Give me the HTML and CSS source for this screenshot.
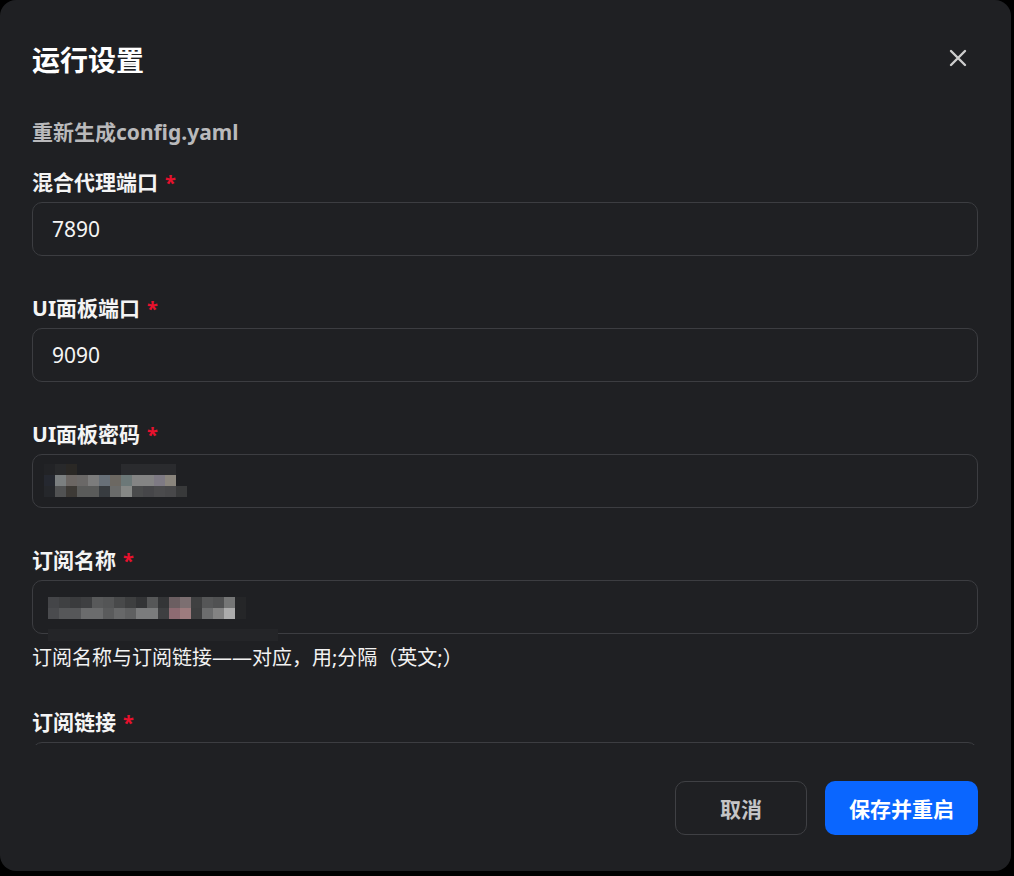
FILE: index.html
```html
<!DOCTYPE html>
<html lang="zh-CN">
<head>
<meta charset="utf-8">
<title>运行设置</title>
<link rel="stylesheet" href="styles.css">
</head>
<body>
<div class="dialog">
  <div class="header">
    <h1 class="title">运行设置</h1>
    <button class="close" aria-label="关闭">
      <svg width="18" height="18" viewBox="0 0 18 18"><path d="M2 2L16 16M16 2L2 16" stroke="#cdcdcd" stroke-width="2.4" stroke-linecap="round" fill="none"/></svg>
    </button>
  </div>
  <div class="body">
    <div class="section-title">重新生成config.yaml</div>
    <div class="fields">
      <div class="field">
        <label class="label">混合代理端口<span class="req">*</span></label>
        <div class="input">7890</div>
      </div>
      <div class="field">
        <label class="label">UI面板端口<span class="req">*</span></label>
        <div class="input">9090</div>
      </div>
      <div class="field">
        <label class="label">UI面板密码<span class="req">*</span></label>
        <div class="input">
          <div class="mosaic mosaic-pass">
            <i style="background:#222326"></i><i style="background:#28292b"></i><i style="background:#2a2825"></i><i></i><i></i><i></i><i></i><i style="background:#2a2b2e"></i><i style="background:#2a2b2e"></i><i style="background:#2a2b2e"></i><i style="background:#2a2b2e"></i><i style="background:#2a2b2e"></i><i></i>
            <i style="background:#252830"></i><i style="background:#7b7f80"></i><i style="background:#6b6663"></i><i style="background:#6a6867"></i><i style="background:#7c7c7c"></i><i style="background:#687078"></i><i style="background:#6c6862"></i><i style="background:#6c7878"></i><i style="background:#848484"></i><i style="background:#848484"></i><i style="background:#7e7a84"></i><i style="background:#8a857d"></i><i></i>
            <i style="background:#25272b"></i><i style="background:#515253"></i><i style="background:#3d3a36"></i><i style="background:#5a5b5a"></i><i style="background:#5a5b5a"></i><i style="background:#383c40"></i><i style="background:#6a6b6a"></i><i style="background:#868886"></i><i style="background:#4a4b4c"></i><i style="background:#464649"></i><i style="background:#4b4b4d"></i><i style="background:#48484a"></i><i style="background:#38393a"></i>
          </div>
        </div>
      </div>
      <div class="field">
        <label class="label">订阅名称<span class="req">*</span></label>
        <div class="input">
          <div class="mosaic mosaic-name">
            <i style="background:#444548"></i><i style="background:#3f4042"></i><i style="background:#3a3b3d"></i><i style="background:#3e3f41"></i><i style="background:#58595a"></i><i style="background:#545556"></i><i style="background:#48494a"></i><i style="background:#3e3f40"></i><i style="background:#333436"></i><i style="background:#565758"></i><i style="background:#343537"></i><i style="background:#6b5e61"></i><i style="background:#7c6f71"></i><i style="background:#3f4041"></i><i style="background:#555657"></i><i style="background:#505152"></i><i style="background:#757676"></i><i style="background:#252628"></i>
            <i style="background:#4a4b4e"></i><i style="background:#565759"></i><i style="background:#565759"></i><i style="background:#6b6c6d"></i><i style="background:#6b6c6d"></i><i style="background:#5a5b5c"></i><i style="background:#676869"></i><i style="background:#5f6061"></i><i style="background:#7b7c7d"></i><i style="background:#7b7c7d"></i><i style="background:#3e3f41"></i><i style="background:#8d6b72"></i><i style="background:#9d7c7e"></i><i style="background:#3d3e3f"></i><i style="background:#6c6d6e"></i><i style="background:#838383"></i><i style="background:#acacac"></i><i style="background:#252628"></i>
          </div>
          <div class="mosaic-band"></div>
        </div>
        <div class="helper">订阅名称与订阅链接——对应，用;分隔（英文;）</div>
      </div>
      <div class="field">
        <label class="label">订阅链接<span class="req">*</span></label>
        <div class="input"></div>
      </div>
    </div>
  </div>
  <div class="footer">
    <button class="btn btn-cancel">取消</button>
    <button class="btn btn-primary">保存并重启</button>
  </div>
</div>
</body>
</html>
```

FILE: styles.css
```css
* { box-sizing: border-box; }

html, body {
  margin: 0;
  padding: 0;
  background: #000;
}

body {
  font-family: "Noto Sans", "Noto Sans CJK SC", sans-serif;
  color: #f2f2f2;
}

.dialog {
  width: 1011px;
  height: 871px;
  background: #1f2023;
  border-radius: 16px;
  display: flex;
  flex-direction: column;
  overflow: hidden;
}

.header {
  height: 100px;
  flex: none;
  display: flex;
  align-items: flex-start;
  justify-content: space-between;
  padding: 42px 37px 0 32px;
}

.title {
  margin: 0;
  font-size: 28px;
  line-height: 36px;
  height: 36px;
  font-weight: 700;
  color: #ffffff;
}

.close {
  width: 32px;
  height: 32px;
  padding: 0;
  border: 0;
  background: transparent;
  display: flex;
  align-items: center;
  justify-content: center;
}

.body {
  flex: 1;
  overflow: hidden;
  padding: 18px 33px 0 32px;
}

.section-title {
  font-size: 21px;
  line-height: 28px;
  height: 28px;
  font-weight: 700;
  color: #b9b9bb;
}

.fields {
  margin-top: 24px;
  display: flex;
  flex-direction: column;
  gap: 40px;
}

.field {
  display: flex;
  flex-direction: column;
}

.label {
  display: block;
  height: 28px;
  font-size: 21px;
  line-height: 24px;
  font-weight: 700;
  color: #f4f4f4;
  margin-bottom: 4px;
}

.req {
  color: #e8112d;
  margin-left: 7px;
  font-size: 20px;
  line-height: 1;
}

.input {
  position: relative;
  flex: none;
  height: 54px;
  border: 1px solid #3c3d41;
  border-radius: 10px;
  padding: 0 19px;
  display: flex;
  align-items: center;
  font-size: 21px;
  color: #f4f4f4;
  background: #1f2023;
}

.mosaic {
  position: absolute;
  display: grid;
  grid-template-columns: repeat(13, 11px);
  grid-auto-rows: 11px;
}

.mosaic i {
  display: block;
}

.mosaic-pass {
  left: 11px;
  top: 9px;
}

.mosaic-name {
  left: 15px;
  top: 16px;
  grid-template-columns: repeat(18, 11px);
}

.mosaic-band {
  position: absolute;
  left: 15px;
  top: 48px;
  width: 230px;
  height: 12px;
  background: #242528;
}

.helper {
  margin-top: 8px;
  height: 28px;
  font-size: 20px;
  line-height: 32px;
  color: #f2f2f2;
}

.footer {
  height: 126px;
  flex: none;
  display: flex;
  justify-content: flex-end;
  align-items: center;
  gap: 18px;
  padding: 0 33px 0 32px;
}

.btn {
  height: 54px;
  border-radius: 10px;
  font-family: "Noto Sans", "Noto Sans CJK SC", sans-serif;
  font-size: 21px;
  font-weight: 700;
  cursor: pointer;
}

.btn-cancel {
  width: 132px;
  background: transparent;
  border: 1px solid #3f4044;
  color: #c4c4c6;
}

.btn-primary {
  width: 153px;
  background: #0a66ff;
  border: 0;
  color: #ffffff;
}
```
